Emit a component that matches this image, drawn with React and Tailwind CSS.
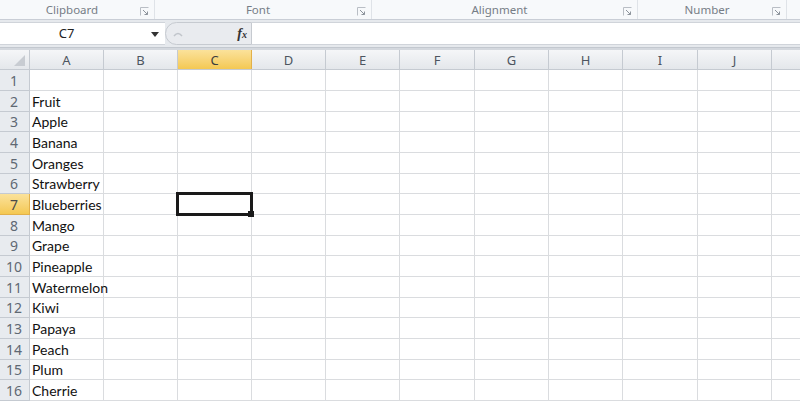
import React from 'react'

const groups = [
  { label: 'Clipboard', w: 'w-[155px]' },
  { label: 'Font', w: 'w-[217px]' },
  { label: 'Alignment', w: 'w-[266px]' },
  { label: 'Number', w: 'w-[149px]' },
]

const columns = [
  { id: 'A', w: 'w-[74px]' },
  { id: 'B', w: 'w-[74px]' },
  { id: 'C', w: 'w-[74px]' },
  { id: 'D', w: 'w-[74px]' },
  { id: 'E', w: 'w-[74px]' },
  { id: 'F', w: 'w-[75px]' },
  { id: 'G', w: 'w-[74px]' },
  { id: 'H', w: 'w-[74px]' },
  { id: 'I', w: 'w-[75px]' },
  { id: 'J', w: 'w-[74px]' },
]

const fruits = ['', 'Fruit', 'Apple', 'Banana', 'Oranges', 'Strawberry', 'Blueberries', 'Mango', 'Grape', 'Pineapple', 'Watermelon', 'Kiwi', 'Papaya', 'Peach', 'Plum', 'Cherrie']

// 11 rows of 21px, 5 of 20px, spread out
const rowHeight = (i) => ((i + 1) % 3 === 0 ? 'h-[20px]' : 'h-[21px]')

const Launcher = () => (
  <svg width="9" height="9" viewBox="0 0 9 9" className="shrink-0">
    <path d="M0.5 8.5V0.5H8.5" fill="none" stroke="#b9bec5" />
    <path d="M3 3L7.5 7.5M4.5 7.5H7.5V4.5" fill="none" stroke="#8d949c" />
  </svg>
)

export default function App() {
  return (
    <div className="w-[800px] h-[402px] overflow-hidden bg-white select-none" style={{ fontFamily: '"Noto Sans", Arial, sans-serif' }}>
      {/* ribbon group labels */}
      <div className="flex h-[20px] bg-[#f7f9fb] border-b border-[#c9ced6]">
        {groups.map((g) => (
          <div key={g.label} className={`${g.w} flex items-center border-r border-[#dfe3e8] shrink-0`}>
            <span className="flex-1 text-center text-[11.5px] text-[#767d86] pl-1">{g.label}</span>
            <span className="pr-[5px] pt-[4px]"><Launcher /></span>
          </div>
        ))}
        <div className="flex-1" />
      </div>

      {/* formula bar */}
      <div className="h-[28px] bg-[#e6e9ed] border-b border-[#c3c8cf] flex pt-[2px] pb-[2px]">
        <div className="w-[165px] bg-white flex items-center shrink-0 border-y border-[#d0d4da]">
          <span className="flex-1 text-center text-[13px] text-[#222] pr-[18px]">C7</span>
          <svg width="8" height="5" viewBox="0 0 8 5" className="mr-[6px] mt-[1px]">
            <path d="M0 0H8L4 5Z" fill="#333" />
          </svg>
        </div>
        <div className="w-[87px] shrink-0 bg-[#e9ebef] rounded-l-[12px] border border-[#c6cad0] flex items-center justify-between pl-[7px] pr-[4px]">
          <svg width="10" height="6" viewBox="0 0 10 6">
            <path d="M1 5Q5 0 9 5" fill="none" stroke="#c1c5cb" strokeWidth="1.5" />
          </svg>
          <span className="text-[14px] text-[#333] italic font-bold leading-none" style={{ fontFamily: '"Liberation Serif", serif' }}>
            f<span className="text-[10px]">x</span>
          </span>
        </div>
        <div className="flex-1 bg-white border-y border-[#d0d4da]" />
      </div>

      <div className="h-[2px] bg-[#d4d8de]" />

      {/* column headers */}
      <div className="flex h-[20px] bg-gradient-to-b from-[#f5f6f8] to-[#e4e7eb] border-b border-[#c5cad1]">
        <div className="w-[30px] shrink-0 border-r border-[#c5cad1] relative">
          <svg width="11" height="11" viewBox="0 0 11 11" className="absolute right-[4px] bottom-[3px]">
            <path d="M11 0V11H0Z" fill="#c8ccd2" />
          </svg>
        </div>
        {columns.map((c) => (
          <div
            key={c.id}
            className={`${c.w} shrink-0 border-r flex items-center justify-center pt-[2px] text-[13px] ${c.id === 'C' ? 'bg-gradient-to-b from-[#fbe29a] to-[#f4c851] border-[#e2b04a] text-[#3d3d3d]' : 'border-[#c5cad1] text-[#4d5560]'}`}
          >
            {c.id}
          </div>
        ))}
        <div className="flex-1" />
      </div>

      {/* rows */}
      <div className="flex flex-col">
        {fruits.map((f, i) => {
          const n = i + 1
          const sel = n === 7
          return (
            <div key={n} className={`flex ${rowHeight(i)} shrink-0`}>
              <div
                className={`w-[30px] shrink-0 border-r border-b flex items-center justify-center pr-[1px] text-[14px] ${sel ? 'bg-gradient-to-b from-[#fbe29a] to-[#f4c851] border-[#e2b04a] text-[#4a4a4a]' : 'bg-[#e8ebef] border-[#c5cad1] text-[#5f6873]'}`}
              >
                {n}
              </div>
              {columns.map((c, ci) => (
                <div key={c.id} className={`${c.w} shrink-0 border-r border-b border-[#dadcdf] relative flex items-center`}>
                  {ci === 0 && f && (
                    <span className="pl-[2px] text-[14px] text-[#111] whitespace-nowrap" style={{ fontFamily: 'Lato, sans-serif' }}>{f}</span>
                  )}
                  {sel && c.id === 'C' && (
                    <div className="absolute -left-[2px] -top-[2px] right-[-2px] bottom-[-2px] border-[3px] border-[#1a1a1a] z-10">
                      <div className="absolute -right-[4px] -bottom-[4px] w-[6px] h-[6px] bg-[#1a1a1a]" />
                    </div>
                  )}
                </div>
              ))}
              <div className="flex-1 border-b border-[#dadcdf]" />
            </div>
          )
        })}
      </div>
    </div>
  )
}
